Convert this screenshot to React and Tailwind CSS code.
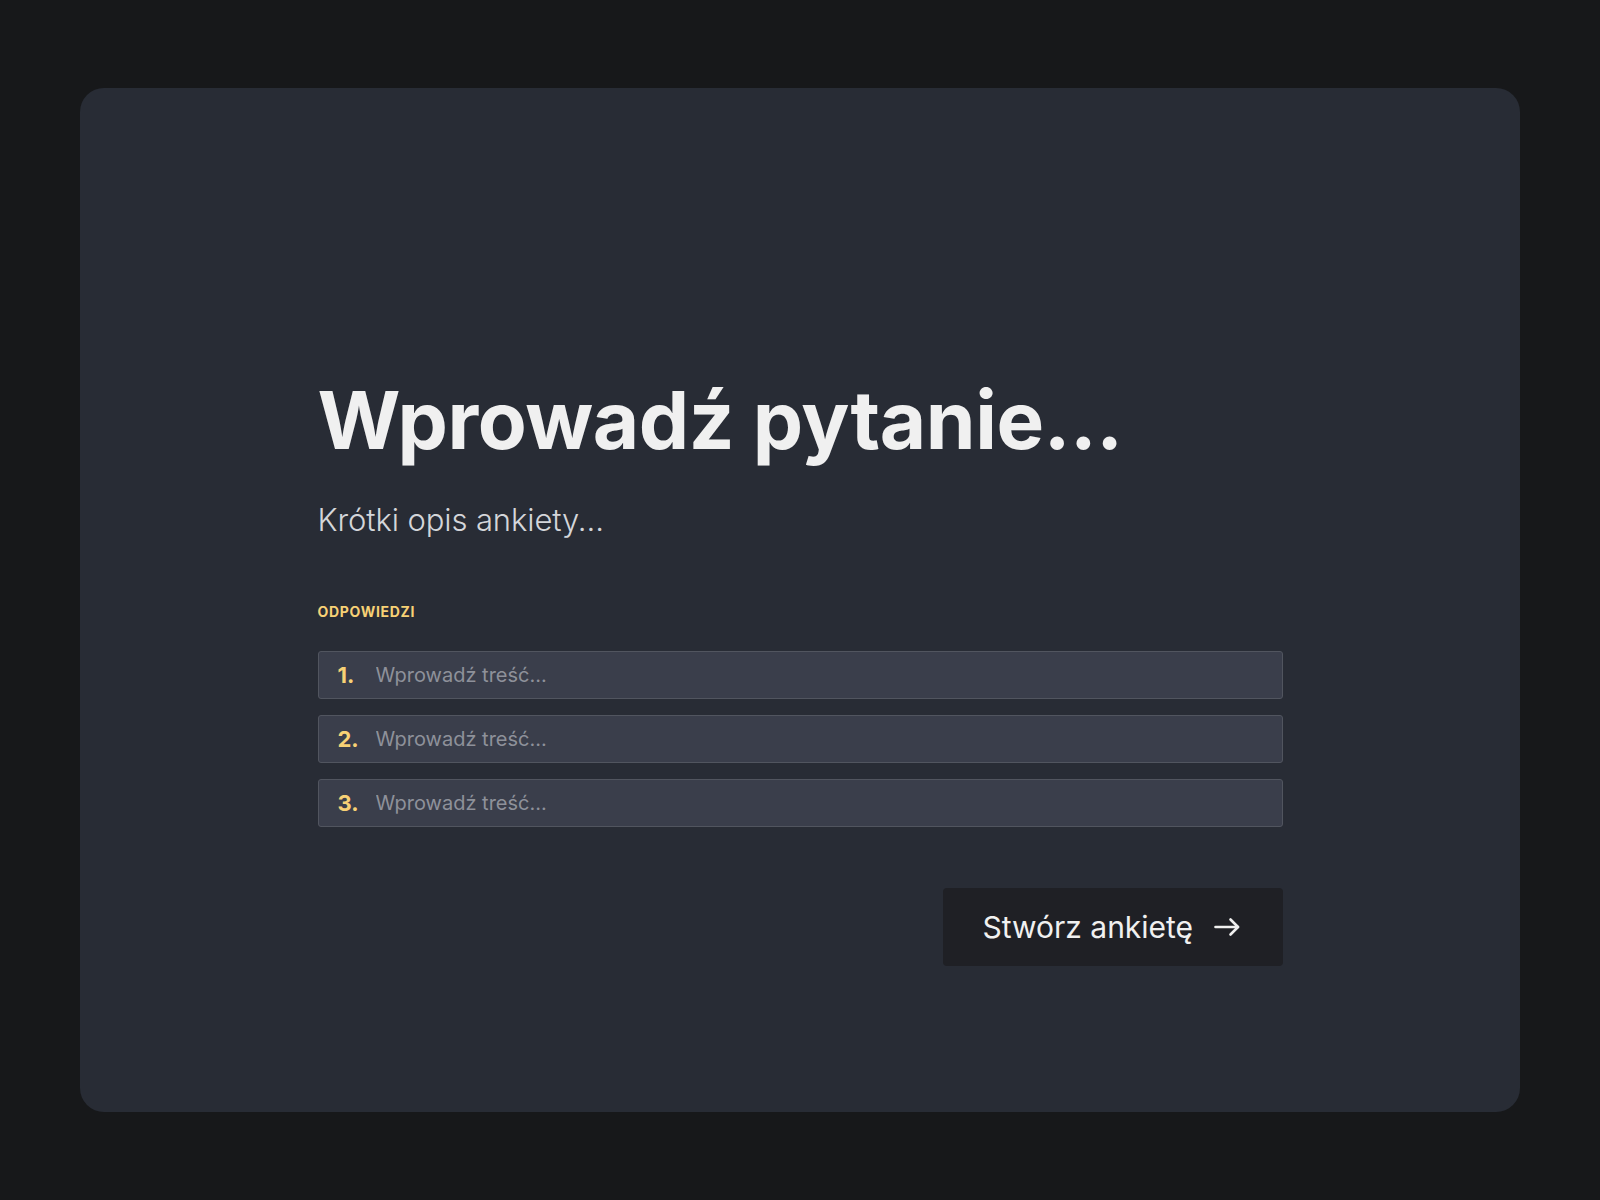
export default function App() {
  const items = [1, 2, 3];
  return (
    <div className="min-h-[1200px] w-full bg-[#17181a] px-[80px] pt-[88px] pb-[88px]" style={{ fontFamily: "Inter, 'Noto Sans', sans-serif" }}>
      <div className="h-[1024px] rounded-[24px] bg-[#282c35] pt-[292px]">
        <div className="mx-auto w-[965px]">
          <h1 className="text-[80px] font-bold leading-[80px] tracking-[-0.4px] text-[#f0f0f0]">Wprowadź pytanie...</h1>
          <p className="mt-[42px] text-[31px] font-light leading-[36px] tracking-[-0.1px] text-[#d4d6da]">Krótki opis ankiety...</p>
          <div className="mt-[64px] text-[14px] font-bold leading-[20px] tracking-[0.7px] text-[#f7d175]">ODPOWIEDZI</div>
          <div className="mt-[29px] flex flex-col gap-[16px]">
            {items.map((n) => (
              <label key={n} className="flex h-[48px] items-center rounded-[3px] border border-[#51555f] bg-[#3a3e4b] pl-[19px]">
                <span className="w-[38px] text-[22px] font-bold text-[#f7d175]">{n}.</span>
                <input
                  className="flex-1 bg-transparent text-[20px] text-[#e5e7eb] outline-none placeholder:text-[#8e919a]"
                  placeholder="Wprowadź treść..."
                />
              </label>
            ))}
          </div>
          <div className="mt-[61px] flex justify-end">
            <button className="flex h-[78px] w-[340px] items-center rounded-[4px] bg-[#1f2025] pl-[40px] text-[30px] font-normal text-[#f0f0f0]">
              <span>Stwórz ankietę</span>
              <svg className="ml-[21px]" width="26" height="20" viewBox="0 0 26 20" fill="none" stroke="#f0f0f0" strokeWidth="2.6" strokeLinecap="round" strokeLinejoin="round">
                <path d="M1.5 10H24" />
                <path d="M16.5 2.5L24 10L16.5 17.5" />
              </svg>
            </button>
          </div>
        </div>
      </div>
    </div>
  );
}
